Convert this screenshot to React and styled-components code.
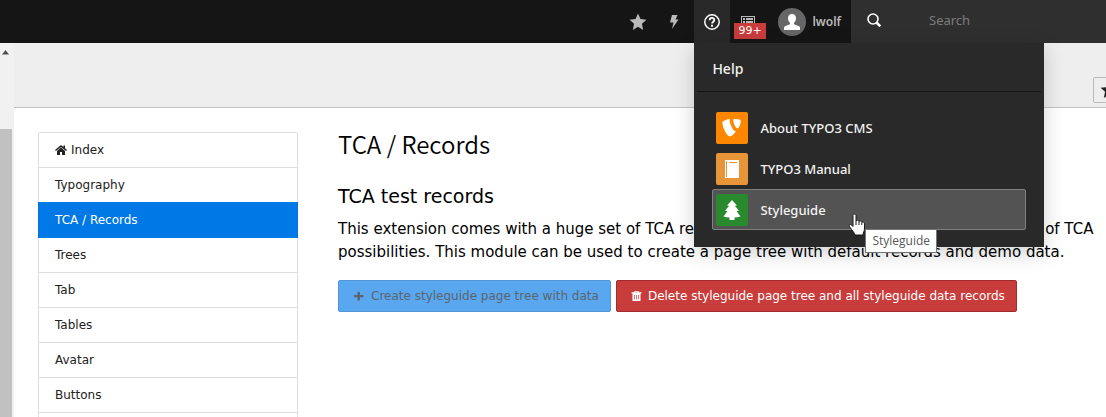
import React from "react";
import styled, { createGlobalStyle } from "styled-components";

const GlobalStyle = createGlobalStyle`
  * { box-sizing: border-box; }
  body {
    margin: 0;
    overflow: hidden;
    background: #fff;
    color: #000;
    font-family: "DejaVu Sans", Verdana, sans-serif;
    font-size: 12px;
    line-height: 18px;
  }
`;

const Page = styled.div`
  display: flex;
  flex-direction: column;
  height: 100vh;
  overflow: hidden;
`;

const Topbar = styled.header`
  display: flex;
  flex: none;
  justify-content: flex-end;
  height: 43px;
  background: #151515;
`;

const Shortcuts = styled.div`
  display: flex;
  padding-right: 2px;
`;

const ToolbarItem = styled.div`
  position: relative;
  display: flex;
`;

const ToolbarButton = styled.button`
  display: flex;
  align-items: center;
  justify-content: center;
  gap: 6px;
  min-width: 36px;
  padding: ${(p) => (p.$wide ? "0 10px 0 12px" : "0")};
  border: 0;
  background: ${(p) => (p.$active ? "#292929" : "transparent")};
  color: ${(p) => (p.$active ? "#fff" : "#b9b9b9")};
  font: 600 12px/18px "Noto Sans", sans-serif;
`;

const Badge = styled.span`
  position: absolute;
  left: 4px;
  top: 23px;
  padding: 0 4px;
  background: #c83c3c;
  color: #fff;
  font: 11px/16px "DejaVu Sans", sans-serif;
`;

const SearchBox = styled.label`
  display: flex;
  align-items: center;
  gap: 48px;
  width: 255px;
  padding: 0 16px 3px;
  background: #2f2f2f;
  color: #fff;
`;

const SearchInput = styled.input`
  flex: 1;
  min-width: 0;
  padding: 0;
  border: 0;
  outline: 0;
  background: transparent;
  color: #fff;
  font: 13px/18px "Noto Sans", sans-serif;
  &::placeholder { color: #7c7c7c; opacity: 1; }
`;

const Dropdown = styled.section`
  position: absolute;
  z-index: 2;
  left: 0;
  top: 100%;
  width: 350px;
  padding: 0 3px 17px;
  background: #292929;
  box-shadow: 0 6px 20px rgba(0, 0, 0, 0.18);
  color: #f2f2f2;
`;

const DropdownTitle = styled.h3`
  margin: 0;
  padding: 16px 15px 13px;
  border-bottom: 1px solid #151515;
  font: 500 14px/19px "Noto Sans", sans-serif;
`;

const MenuList = styled.ul`
  display: grid;
  gap: 0;
  margin: 0;
  padding: 15px 15px 0;
  list-style: none;
`;

const MenuLink = styled.a`
  display: flex;
  align-items: center;
  gap: 12px;
  height: 41px;
  padding: 0 3px;
  border: 1px solid ${(p) => (p.$hover ? "#808080" : "transparent")};
  border-radius: 2px;
  background: ${(p) => (p.$hover ? "#535353" : "transparent")};
  color: #f2f2f2;
  font: 500 13px/18px "Noto Sans", sans-serif;
  text-decoration: none;
`;

const IconTile = styled.span`
  display: flex;
  width: 32px;
  height: 32px;
  border-radius: 2px;
  background: ${(p) => p.$color};
`;

const Pointer = styled.svg`
  position: absolute;
  z-index: 4;
  left: 154px;
  top: 213px;
`;

const Tooltip = styled.span`
  position: absolute;
  z-index: 3;
  left: 171px;
  top: 229px;
  padding: 2px 6px;
  border: 1px solid #767676;
  background: #fff;
  color: #575757;
  font: 12px/18px "Open Sans", sans-serif;
  white-space: nowrap;
`;

const Body = styled.div`
  display: flex;
  flex: 1;
  min-height: 0;
`;

const ScrollTrack = styled.div`
  flex: none;
  display: flex;
  flex-direction: column;
  width: 14px;
  padding-top: 7px;
  background: #f1f1f1;
`;

const ScrollThumb = styled.div`
  flex: 1;
  width: 12px;
  margin-top: 74px;
  background: #c1c1c1;
`;

const Module = styled.main`
  display: flex;
  flex: 1;
  flex-direction: column;
  min-width: 0;
`;

const DocHeader = styled.div`
  display: flex;
  flex: none;
  align-items: flex-end;
  justify-content: flex-end;
  height: 65px;
  padding-bottom: 4px;
  overflow: hidden;
  border-bottom: 1px solid #c3c3c3;
  background: #eee;
`;

const BookmarkButton = styled.button`
  display: flex;
  align-items: center;
  justify-content: center;
  width: 32px;
  height: 26px;
  margin-right: -19px;
  padding: 0;
  border: 1px solid #bbb;
  border-radius: 2px;
  background: #eee;
  color: #222;
`;

const Content = styled.div`
  display: flex;
  flex: 1;
  gap: 40px;
  min-height: 0;
  padding: 24px 0 0 24px;
`;

const SideNav = styled.nav`
  flex: none;
  width: 260px;
  border: 1px solid #ddd;
  border-bottom: 0;
  border-radius: 2px 2px 0 0;
`;

const NavLink = styled.a`
  display: flex;
  align-items: center;
  gap: 4px;
  height: 35px;
  margin: ${(p) => (p.$active ? "-1px -1px 0" : "0")};
  padding: ${(p) => (p.$active ? "0 17px" : "0 16px")};
  border-bottom: ${(p) => (p.$active ? "0" : "1px solid #ddd")};
  ${(p) => p.$active && "height: 36px;"}
  background: ${(p) => (p.$active ? "#0078e6" : "#fff")};
  color: ${(p) => (p.$active ? "#fff" : "#212121")};
  text-decoration: none;
`;

const Article = styled.article`
  flex: 1;
  min-width: 0;
`;

const Title = styled.h1`
  margin: 0;
  font: 350 24px/24px "Noto Sans CJK JP", sans-serif;
`;

const Subtitle = styled.h2`
  margin: 28px 0 10px;
  font-size: 19px;
  font-weight: 400;
  line-height: 24px;
`;

const Text = styled.p`
  margin: 0 0 16px;
  font-size: 15px;
  line-height: 23px;
`;

const Actions = styled.div`
  display: flex;
  gap: 5px;
`;

const ActionButton = styled.button`
  display: flex;
  align-items: center;
  gap: 6px;
  height: 32px;
  padding: 0 11px 0 14px;
  border: 1px solid ${(p) => (p.$danger ? "#a32b2b" : "#5296d8")};
  border-radius: 2px;
  background: ${(p) => (p.$danger ? "#c83c3c" : "#59a7ef")};
  color: ${(p) => (p.$danger ? "#fff" : "#5b6570")};
  font: 12px/18px "DejaVu Sans", sans-serif;
  white-space: nowrap;
`;

const Star = () => (
  <svg width="18" height="18" viewBox="0 0 16 16" fill="currentColor" aria-hidden="true">
    <path d="M8 .5l2.200 4.900 5.300.6-4 3.600L12.600 15 8 12.200 3.400 15l1.100-5.400-4-3.600 5.300-.6z" />
  </svg>
);

const Bolt = () => (
  <svg width="16" height="16" viewBox="0 0 16 16" fill="currentColor" aria-hidden="true">
    <path d="M6 1h5.500L9.500 5.500H12.500L6 15l1.500-6.500H4z" />
  </svg>
);

const Question = () => (
  <svg width="16" height="16" viewBox="0 0 16 16" fill="none" stroke="currentColor" aria-hidden="true">
    <circle cx="8" cy="8" r="7.200" strokeWidth="1.500" />
    <path d="M5.700 6.200C5.700 3.200 10.300 3.200 10.300 6c0 1.700-2.200 1.800-2.200 3.600" strokeWidth="1.800" />
    <path d="M7 10.800h2v1.900H7z" fill="currentColor" stroke="none" />
  </svg>
);

const ListIcon = () => (
  <svg width="16" height="16" viewBox="0 0 16 16" fill="currentColor" aria-hidden="true">
    <path fillRule="evenodd" d="M1 2h14v12H1zM2 3v10h12V3z" />
    <path d="M3 4h2v2H3zM6 4h7v2H6zM3 7h2v2H3zM6 7h7v2H6zM3 10h2v2H3zM6 10h7v2H6z" />
  </svg>
);

const Avatar = () => (
  <svg width="28" height="28" viewBox="0 0 28 28" aria-hidden="true">
    <circle cx="14" cy="14" r="14" fill="#666" />
    <path fill="#fff" d="M14 6c2.600 0 4 1.700 4 4.200 0 2-.8 3.500-2 4.600v1.400c1.600 1 4.500 1 6 3V22H6v-2.800c1.500-2 4.400-2 6-3v-1.400c-1.200-1.100-2-2.600-2-4.600C10 7.700 11.400 6 14 6z" />
  </svg>
);

const Magnifier = () => (
  <svg width="14" height="14" viewBox="0 0 14 14" fill="none" stroke="currentColor" aria-hidden="true">
    <circle cx="6" cy="6" r="5" strokeWidth="1.600" />
    <path d="M9.500 9.500l3.800 3.800" strokeWidth="2.600" />
  </svg>
);

const Home = () => (
  <svg width="12" height="12" viewBox="0 0 12 12" fill="currentColor" aria-hidden="true">
    <path d="M6 3.600l4 3.300V11H7V8H5v3H2V6.900z" />
    <path d="M6 1l2.500 2V1.500H10v2.800l2 1.700-.9 1L6 2.900.9 7 0 6z" />
  </svg>
);

const Plus = () => (
  <svg width="12" height="12" viewBox="0 0 12 12" fill="currentColor" aria-hidden="true">
    <path d="M4.500 2H7v3h3.500v2.300H7v3.200H4.500V7.300H1V5h3.500z" />
  </svg>
);

const Trash = () => (
  <svg width="11" height="12" viewBox="0 0 11 12" fill="currentColor" aria-hidden="true">
    <path fillRule="evenodd" d="M3.500 1h4L8 2.200h2.500v1.300H.5V2.200H3zM4.200 1.700L4 2.200h3l-.2-.5zM1.500 3.500h8V11h-8zM3.200 5v4.500h.7V5zM5.100 5v4.500h.7V5zM7 5v4.500h.7V5z" />
  </svg>
);

const Typo3Glyph = () => (
  <svg width="32" height="32" viewBox="0 0 32 32" fill="#fff" aria-hidden="true">
    <path d="M20.100 19.100c-.3.100-.5.100-.8.100-2.300 0-5.700-8-5.700-10.700 0-1 .2-1.300.6-1.600-2.900.3-6.300 1.400-7.400 2.700-.2.300-.4.900-.4 1.500 0 4.100 4.400 13.500 7.500 13.500 1.500 0 3.900-2.400 6.200-5.500z" />
    <path d="M19 7c2.900 0 5.800.5 5.800 2.100 0 3.300-2.100 7.300-3.200 7.300-1.900 0-4.300-5.300-4.300-8C17.300 7.200 17.800 7 19 7z" />
  </svg>
);

const BookGlyph = () => (
  <svg width="32" height="32" viewBox="0 0 32 32" aria-hidden="true">
    <path fill="#fff" d="M9 7h14v18H9z" />
    <path fill="#e8953a" d="M10 8h1v16h-1zM13 9h8v1h-8z" />
  </svg>
);

const TreeGlyph = () => (
  <svg width="32" height="32" viewBox="0 0 32 32" fill="#fff" aria-hidden="true">
    <path d="M16 6l5 5.500-2.200.3 4.200 5-2.400.4 3.900 5.300c-2 .7-4 .9-6 1V26h-5v-2.500c-2-.1-4-.3-6-1l3.900-5.300-2.400-.4 4.200-5-2.200-.3z" />
  </svg>
);

const helpItems = [
  { label: "About TYPO3 CMS", color: "#ff8700", Glyph: Typo3Glyph },
  { label: "TYPO3 Manual", color: "#e8953a", Glyph: BookGlyph },
  { label: "Styleguide", color: "#288a2d", Glyph: TreeGlyph, hover: true },
];

const pages = ["Index", "Typography", "TCA / Records", "Trees", "Tab", "Tables", "Avatar", "Buttons"];

export default function App() {
  return (
    <Page>
      <GlobalStyle />
      <Topbar>
        <Shortcuts>
          <ToolbarButton aria-label="Bookmarks"><Star /></ToolbarButton>
          <ToolbarButton aria-label="Clear cache"><Bolt /></ToolbarButton>
        </Shortcuts>
        <ToolbarItem>
          <ToolbarButton $active aria-label="Help" aria-expanded="true"><Question /></ToolbarButton>
          <Dropdown>
            <DropdownTitle>Help</DropdownTitle>
            <MenuList>
              {helpItems.map(({ label, color, Glyph, hover }) => (
                <li key={label}>
                  <MenuLink href="#" $hover={hover}>
                    <IconTile $color={color}><Glyph /></IconTile>
                    {label}
                  </MenuLink>
                </li>
              ))}
            </MenuList>
          </Dropdown>
          <Tooltip role="tooltip">Styleguide</Tooltip>
          <Pointer width="18" height="24" viewBox="0 0 18 24" aria-hidden="true">
            <path
              d="M5 2.500C5 .6 8 .6 8 2.500V8c.4-1.200 2.700-1 3 .5.600-1 2.600-.6 2.800.9.900-.7 2.700-.2 2.700 1.500V16c0 2-1.500 3.500-1.500 6H7c0-2-3-4.500-5.500-8.500-1-1.700 1-2.800 2.300-1.300L5 13.500z"
              fill="#fff" stroke="#1d1d1d"
            />
            <path d="M8 8v4M11 8.500V12M13.800 9.500V12" stroke="#1d1d1d" />
          </Pointer>
        </ToolbarItem>
        <ToolbarItem>
          <ToolbarButton aria-label="System information"><ListIcon /></ToolbarButton>
          <Badge>99+</Badge>
        </ToolbarItem>
        <ToolbarItem><ToolbarButton $wide><Avatar />lwolf</ToolbarButton></ToolbarItem>
        <SearchBox>
          <Magnifier />
          <SearchInput type="text" placeholder="Search" aria-label="Search" />
        </SearchBox>
      </Topbar>
      <Body>
        <ScrollTrack>
          <svg width="12" height="5" viewBox="0 0 12 5" aria-hidden="true"><path d="M5.500 0L9 4.500H2z" fill="#505050" /></svg>
          <ScrollThumb />
        </ScrollTrack>
        <Module>
          <DocHeader>
            <BookmarkButton aria-label="Bookmark this page"><Star /></BookmarkButton>
          </DocHeader>
          <Content>
            <SideNav>
              {pages.map((name) => (
                <NavLink key={name} href="#" $active={name === "TCA / Records"}>
                  {name === "Index" && <Home />}
                  {name}
                </NavLink>
              ))}
            </SideNav>
            <Article>
              <Title>TCA / Records</Title>
              <Subtitle>TCA test records</Subtitle>
              <Text>
                This extension comes with a huge set of TCA records and tries to cover a nearly complete set of TCA
                possibilities. This module can be used to create a page tree with default records and demo data.
              </Text>
              <Actions>
                <ActionButton disabled><Plus />Create styleguide page tree with data</ActionButton>
                <ActionButton $danger><Trash />Delete styleguide page tree and all styleguide data records</ActionButton>
              </Actions>
            </Article>
          </Content>
        </Module>
      </Body>
    </Page>
  );
}
